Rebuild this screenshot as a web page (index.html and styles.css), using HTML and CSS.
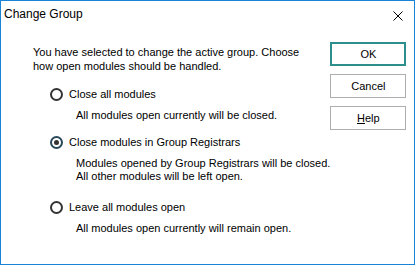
FILE: index.html
```html
<!DOCTYPE html>
<html>
  <head>
    <title>Change Group</title>
    <link rel="stylesheet" href="styles.css">
  </head>
  <body>
    <!-- Dialog window -->
    <div class="window">
      <div class="titlebar">
        <span class="title">Change Group</span>
        <svg class="close" width="10" height="10" viewBox="0 0 10 10">
          <path d="M0.5 0.5 L9.5 9.5 M9.5 0.5 L0.5 9.5" stroke="#000" stroke-width="1" fill="none" />
        </svg>
      </div>

      <div class="content">
        <div class="main">
          <p class="intro">You have selected to change the active group. Choose<br />how open modules should be handled.</p>

          <div class="option first">
            <div class="option-label"><span class="radio"></span>Close all modules</div>
            <p class="option-desc">All modules open currently will be closed.</p>
          </div>

          <div class="option">
            <div class="option-label"><span class="radio checked"></span>Close modules in Group Registrars</div>
            <p class="option-desc">Modules opened by Group Registrars will be closed.<br />All other modules will be left open.</p>
          </div>

          <div class="option last">
            <div class="option-label"><span class="radio"></span>Leave all modules open</div>
            <p class="option-desc">All modules open currently will remain open.</p>
          </div>
        </div>

        <div class="buttons">
          <button class="default">OK</button>
          <button>Cancel</button>
          <button><u>H</u>elp</button>
        </div>
      </div>
    </div>
  </body>
</html>
```

FILE: styles.css
```css
body {
  margin: 0;
  background-color: #fff;
  font-family: "Liberation Sans", Arial, sans-serif;
  font-size: 11px;
  color: #000;
}

.window {
  width: 415px;
  height: 265px;
  box-sizing: border-box;
  border: 1px solid #1883d7;
  background: #fff;
}

.titlebar {
  height: 30px;
  display: flex;
  align-items: center;
  justify-content: space-between;
  padding: 0 11px 0 3px;
}

.title {
  font-size: 12px;
  line-height: 16px;
  margin-top: -4px;
}

.close {
  display: block;
  margin-top: -1px;
}

.content {
  display: flex;
  padding: 11px 17px 0 32px;
}

.main {
  flex: 1;
  white-space: nowrap;
}

p {
  margin: 0;
}

.intro {
  margin-top: 3px;
  line-height: 14px;
}

.option {
  margin-top: 13px;
}

.option.first {
  margin-top: 14px;
}

.option.last {
  margin-top: 17px;
}

.option-label {
  display: flex;
  align-items: center;
  height: 14px;
  margin-left: 17px;
}

.radio {
  width: 13px;
  height: 13px;
  box-sizing: border-box;
  border: 2px solid #333;
  border-radius: 50%;
  margin-right: 6px;
  display: flex;
  align-items: center;
  justify-content: center;
}

.radio.checked {
  border-color: #27495a;
}

.radio.checked::after {
  content: "";
  width: 5px;
  height: 5px;
  border-radius: 50%;
  background: #333;
}

.option-desc {
  margin: 8px 0 0 43px;
  line-height: 13px;
}

.buttons {
  display: flex;
  flex-direction: column;
  gap: 8px;
}

button {
  width: 76px;
  height: 24px;
  box-sizing: border-box;
  background: #fff;
  border: 1px solid #adadad;
  font-family: inherit;
  font-size: 11px;
  color: #000;
  padding: 0;
}

button.default {
  border: 2px solid #2c8f8d;
}
```
